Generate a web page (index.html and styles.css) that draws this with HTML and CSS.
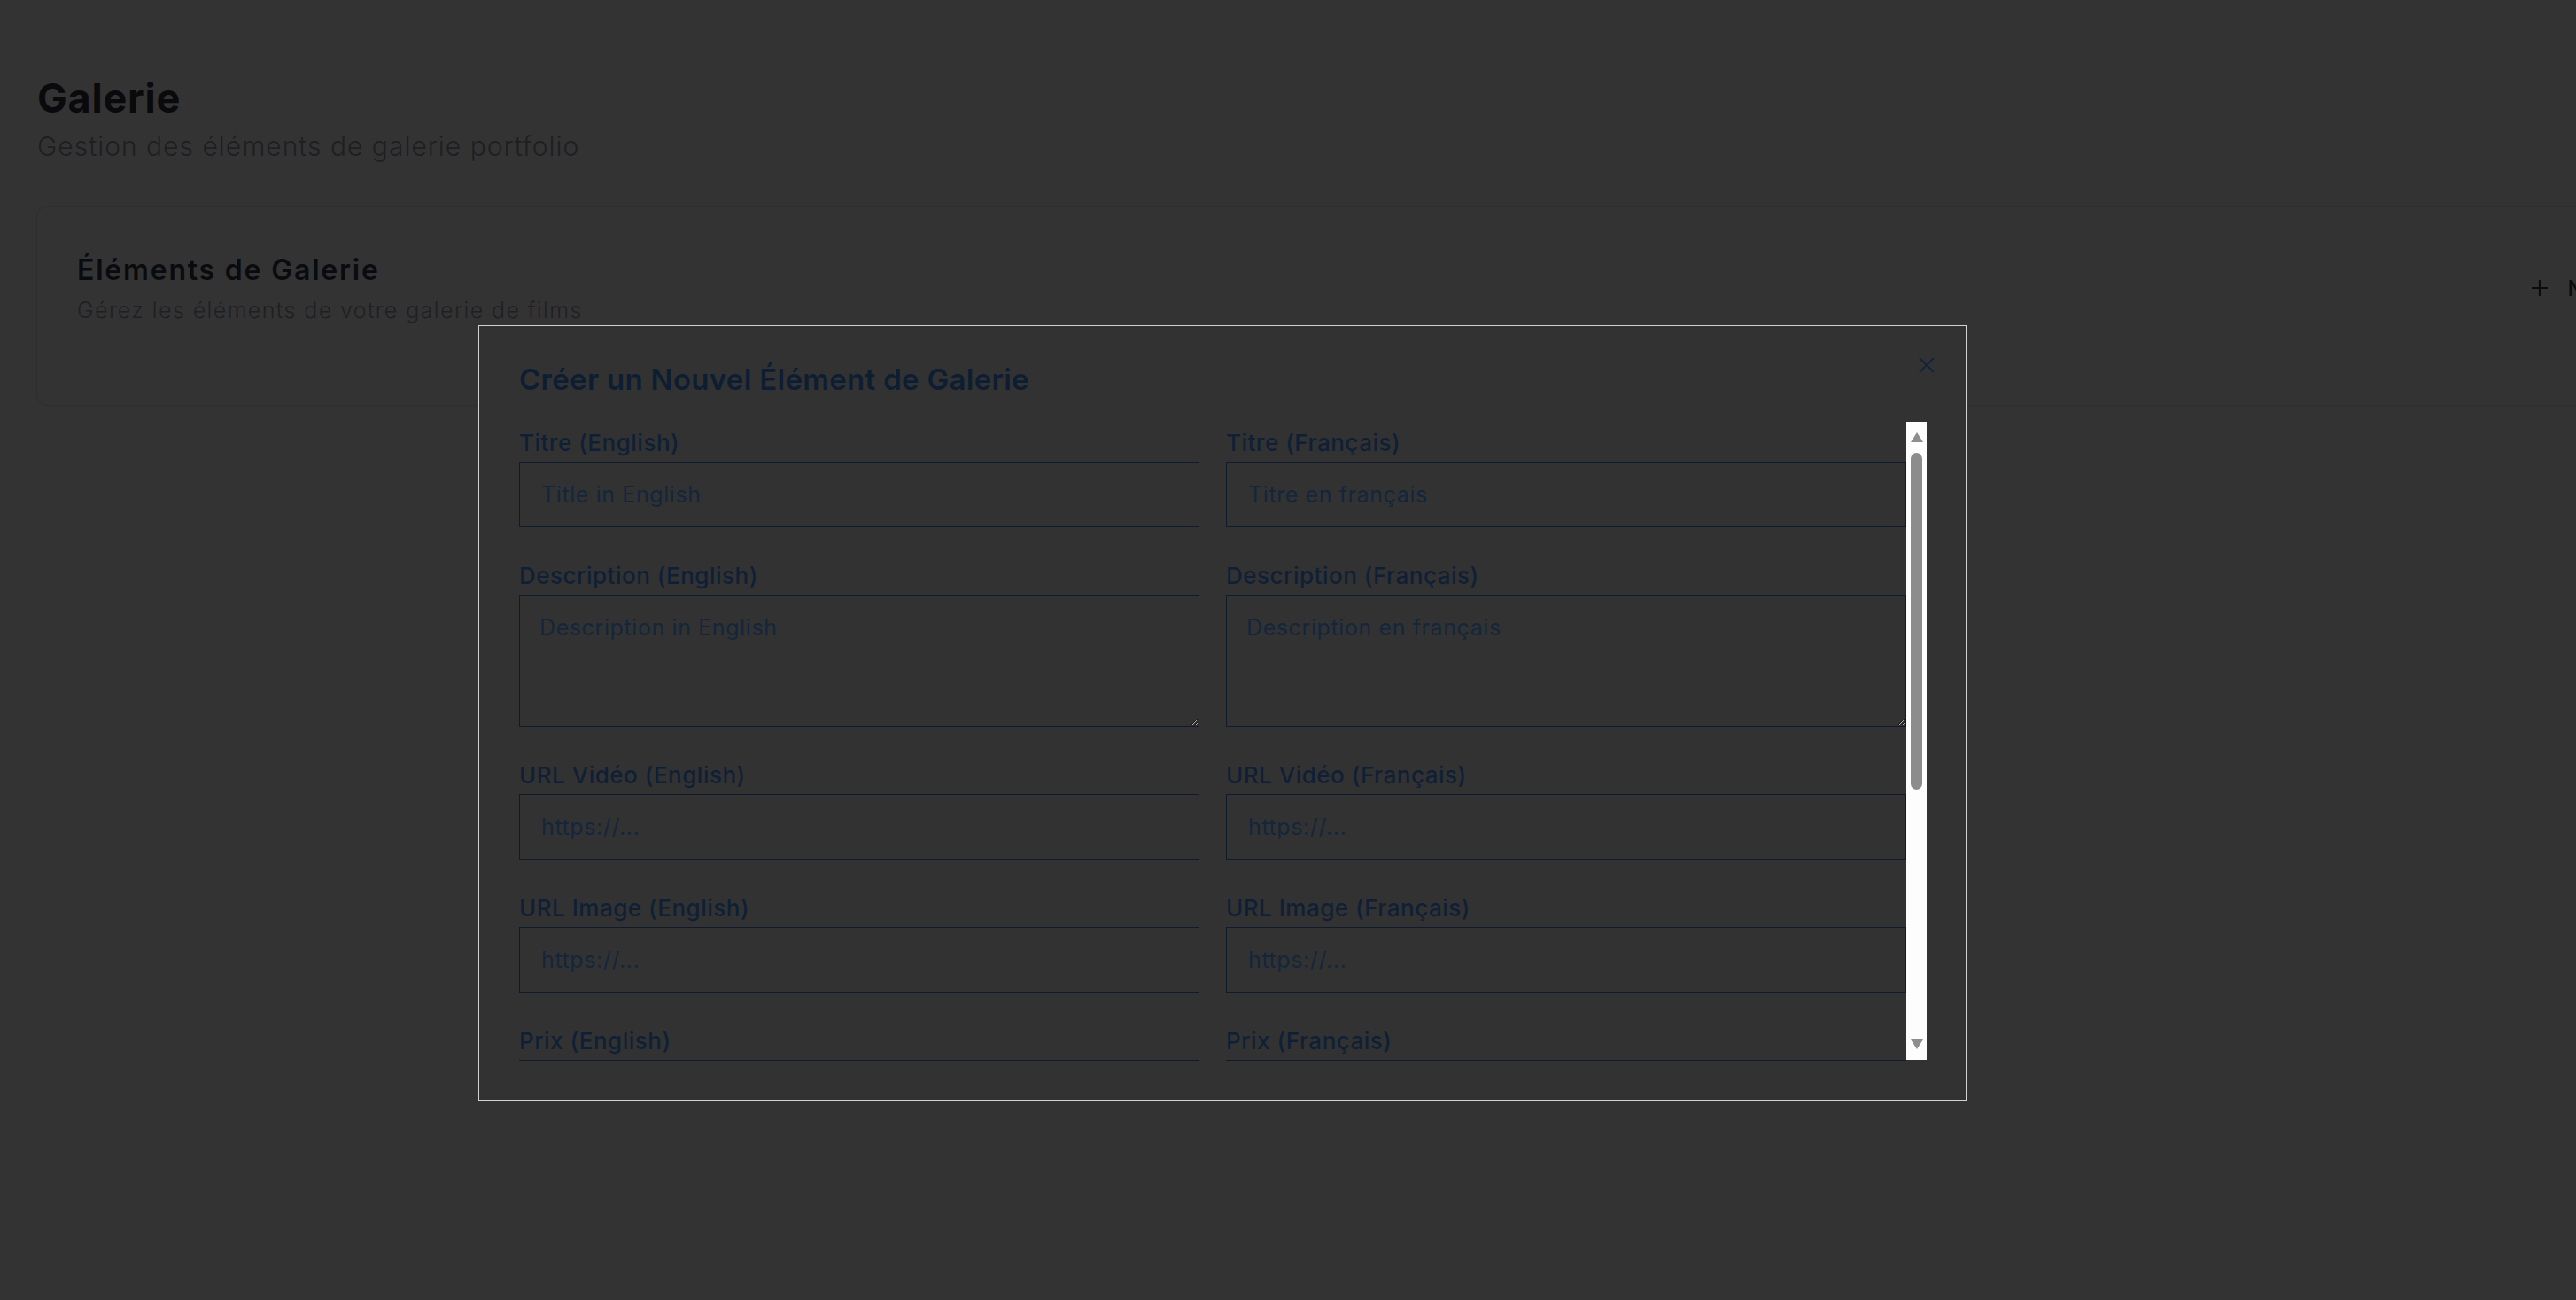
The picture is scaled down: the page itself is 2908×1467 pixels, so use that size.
FILE: index.html
```html
<!DOCTYPE html>
<html lang="fr">
<head>
<meta charset="utf-8">
<title>Galerie</title>
<link rel="stylesheet" href="styles.css">
</head>
<body>
<div class="page">
  <header class="page-head">
    <h1 class="page-title">Galerie</h1>
    <p class="page-sub">Gestion des éléments de galerie portfolio</p>
  </header>
  <section class="card">
    <div class="card-head">
      <div class="card-text">
        <h2 class="card-title">Éléments de Galerie</h2>
        <p class="card-sub">Gérez les éléments de votre galerie de films</p>
      </div>
      <button class="add-btn" type="button">
        <svg class="plus" width="20" height="20" viewBox="0 0 20 20"><path d="M10 1v18M1 10h18" stroke="currentColor" stroke-width="2.2" fill="none"/></svg>
        <span>Nouvel Élément</span>
      </button>
    </div>
  </section>
</div>

<div class="modal">
  <div class="modal-head">
    <h3 class="modal-title">Créer un Nouvel Élément de Galerie</h3>
  </div>
  <button class="close" type="button" aria-label="Fermer">
    <svg width="20" height="20" viewBox="0 0 20 20"><path d="M2 2l16 16M18 2L2 18" stroke="currentColor" stroke-width="1.8" fill="none"/></svg>
  </button>
  <div class="modal-body">
    <form class="scroll">
      <div class="field">
        <label class="label">Titre (English)</label>
        <input class="input" type="text" placeholder="Title in English">
      </div>
      <div class="field">
        <label class="label">Titre (Français)</label>
        <input class="input" type="text" placeholder="Titre en français">
      </div>
      <div class="field">
        <label class="label">Description (English)</label>
        <textarea class="input area" placeholder="Description in English"></textarea>
      </div>
      <div class="field">
        <label class="label">Description (Français)</label>
        <textarea class="input area" placeholder="Description en français"></textarea>
      </div>
      <div class="field">
        <label class="label">URL Vidéo (English)</label>
        <input class="input" type="text" placeholder="https://...">
      </div>
      <div class="field">
        <label class="label">URL Vidéo (Français)</label>
        <input class="input" type="text" placeholder="https://...">
      </div>
      <div class="field">
        <label class="label">URL Image (English)</label>
        <input class="input" type="text" placeholder="https://...">
      </div>
      <div class="field">
        <label class="label">URL Image (Français)</label>
        <input class="input" type="text" placeholder="https://...">
      </div>
      <div class="field">
        <label class="label">Prix (English)</label>
        <input class="input" type="text">
      </div>
      <div class="field">
        <label class="label">Prix (Français)</label>
        <input class="input" type="text">
      </div>
    </form>
    <div class="vscroll" aria-hidden="true">
      <div class="sb-btn sb-up"><span class="tri-up"></span></div>
      <div class="sb-track"><div class="sb-thumb"></div></div>
      <div class="sb-btn sb-down"><span class="tri-down"></span></div>
    </div>
  </div>
</div>
</body>
</html>
```
FILE: styles.css
```css
html, body {
  margin: 0;
  padding: 0;
  overflow: hidden;
  background: #333333;
}
body {
  font-family: Inter, "Noto Sans", sans-serif;
  width: 2908px;
  height: 1467px;
}
.page {
  padding: 84px 0 0 41px;
}
.page-title {
  margin: 0 0 0 1px;
  font-size: 45px;
  line-height: 54px;
  font-weight: 700;
  color: #0a0a0c;
  letter-spacing: 0.8px;
}
.page-sub {
  margin: 6px 0 0 1px;
  font-size: 30px;
  line-height: 42px;
  font-weight: 300;
  color: #1e1f22;
  letter-spacing: 1px;
}
.card {
  margin-top: 47px;
  width: 3107px;
  box-sizing: border-box;
  border: 1px solid #2e2e2e;
  border-radius: 12px;
  padding: 48px 45px 89px 45px;
}
.card-head {
  display: flex;
  align-items: center;
  justify-content: space-between;
}
.card-title {
  margin: 0;
  font-size: 32px;
  line-height: 45px;
  font-weight: 600;
  color: #0a0b0e;
  letter-spacing: 1.8px;
}
.card-sub {
  margin: 5px 0 0;
  font-size: 25px;
  line-height: 36px;
  font-weight: 300;
  color: #1f2023;
  letter-spacing: 1.4px;
}
.add-btn {
  display: flex;
  align-items: center;
  gap: 21px;
  background: transparent;
  border: 0;
  padding: 12px 24px;
  font-family: inherit;
  font-size: 24px;
  font-weight: 500;
  color: #0b0c0f;
}
.modal {
  position: absolute;
  left: 540px;
  top: 367px;
  width: 1680px;
  height: 875px;
  box-sizing: border-box;
  border: 1px solid #d2d2d2;
  background: #323232;
  padding: 36px 44px 43px 45px;
  display: flex;
  flex-direction: column;
}
.modal-head {
  margin-bottom: 24px;
}
.modal-title {
  margin: 0;
  font-size: 33px;
  line-height: 48px;
  font-weight: 600;
  color: #0e1e32;
  letter-spacing: 0.3px;
}
.close {
  position: absolute;
  top: 34px;
  right: 34px;
  width: 20px;
  height: 20px;
  padding: 0;
  border: 0;
  background: transparent;
  color: #13243a;
  display: flex;
}
.modal-body {
  display: flex;
  height: 721px;
}
.scroll {
  flex: 1;
  min-width: 0;
  overflow: hidden;
  display: grid;
  grid-template-columns: 1fr 1fr;
  column-gap: 30px;
  row-gap: 31px;
  align-content: start;
}
.vscroll {
  width: 23px;
  height: 720px;
  background: #fdfdfd;
  display: flex;
  flex-direction: column;
}
.sb-btn {
  height: 29px;
  flex: none;
  display: flex;
  justify-content: center;
  box-sizing: border-box;
  align-items: flex-start;
}
.sb-up {
  padding-top: 12px;
}
.sb-down {
  padding-top: 6px;
}
.tri-up {
  width: 0;
  height: 0;
  border-left: 7px solid transparent;
  border-right: 7px solid transparent;
  border-bottom: 11px solid #8e8e8e;
}
.tri-down {
  width: 0;
  height: 0;
  border-left: 7px solid transparent;
  border-right: 7px solid transparent;
  border-top: 11px solid #8e8e8e;
}
.sb-track {
  flex: 1;
  padding: 6px 5px 0;
}
.sb-thumb {
  height: 380px;
  border-radius: 7px;
  background: #8c8c8c;
}
.field {
  display: flex;
  flex-direction: column;
  min-width: 0;
}
.label {
  font-size: 26px;
  line-height: 36px;
  font-weight: 500;
  color: #0f2036;
  padding-top: 6px;
  margin-bottom: 3px;
  letter-spacing: 0.5px;
}
.input {
  box-sizing: border-box;
  height: 74px;
  width: 100%;
  border: 1px solid #0d1b2d;
  border-radius: 0;
  background: transparent;
  padding: 18px 24px;
  font-family: inherit;
  font-size: 25px;
  line-height: 36px;
  color: #13253b;
  letter-spacing: 0.6px;
  outline: none;
}
.input::placeholder {
  color: #14263c;
  opacity: 1;
}
.area {
  height: 149px;
  resize: vertical;
  padding: 18px 22px;
}
```
